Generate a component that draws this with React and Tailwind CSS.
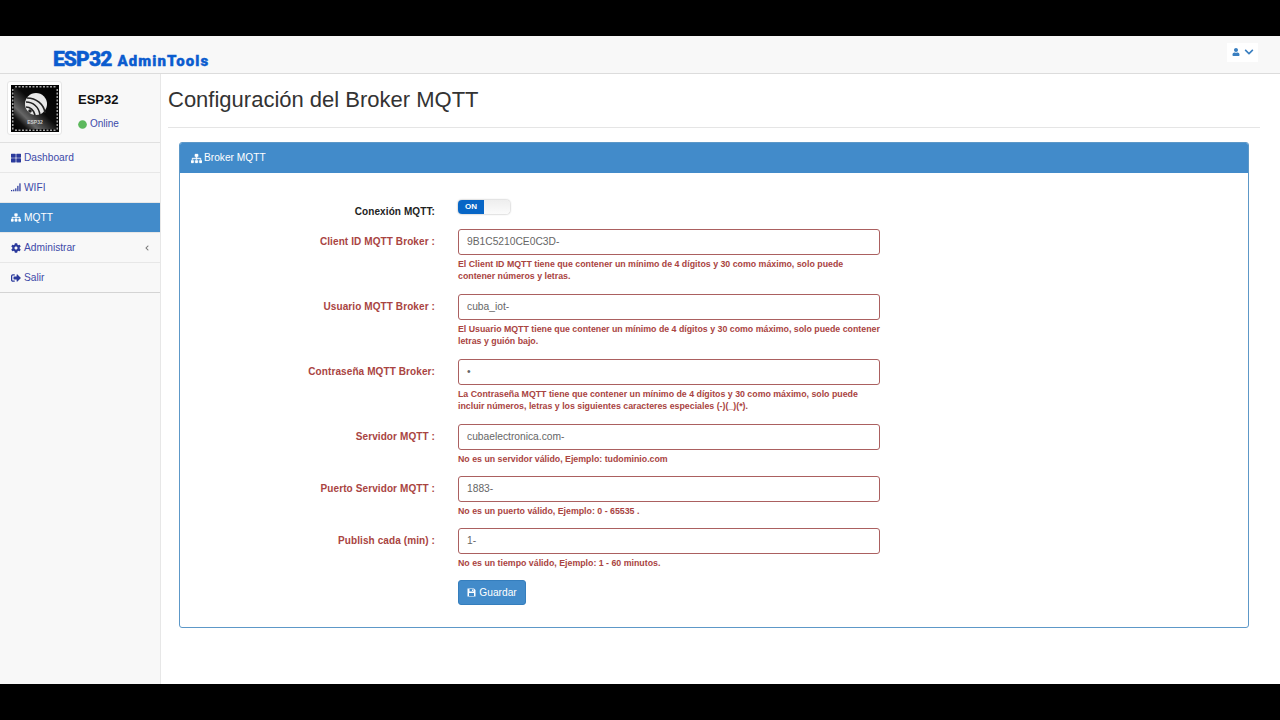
import { FaThLarge, FaSitemap, FaCog, FaSignOutAlt, FaUser, FaChevronDown, FaChevronLeft, FaCircle } from "react-icons/fa";

const fields = [
  { label: "Client ID MQTT Broker :", value: "9B1C5210CE0C3D-", help: ["El Client ID MQTT tiene que contener un mínimo de 4 dígitos y 30 como máximo, solo puede", "contener números y letras."], cls: "mb-[12px]" },
  { label: "Usuario MQTT Broker :", value: "cuba_iot-", help: ["El Usuario MQTT tiene que contener un mínimo de 4 dígitos y 30 como máximo, solo puede contener", "letras y guión bajo."], cls: "mb-[12px]" },
  { label: "Contraseña MQTT Broker:", value: "•", help: ["La Contraseña MQTT tiene que contener un mínimo de 4 dígitos y 30 como máximo, solo puede", "incluir números, letras y los siguientes caracteres especiales (-)(_)(*)."], cls: "mb-[12px]" },
  { label: "Servidor MQTT :", value: "cubaelectronica.com-", help: ["No es un servidor válido, Ejemplo: tudominio.com"], cls: "mb-[11px]" },
  { label: "Puerto Servidor MQTT :", value: "1883-", help: ["No es un puerto válido, Ejemplo: 0 - 65535 ."], cls: "mb-[11px]" },
  { label: "Publish cada (min) :", value: "1-", help: ["No es un tiempo válido, Ejemplo: 1 - 60 minutos."], cls: "mb-[11px]" },
];

function SignalIcon() {
  return (
    <svg width="10" height="9" viewBox="0 0 12 10" fill="currentColor">
      <rect x="0" y="8" width="1.5" height="1.5" />
      <rect x="2.5" y="7.5" width="1.5" height="2" />
      <rect x="5" y="6" width="1.5" height="3.5" />
      <rect x="7.5" y="3" width="1.5" height="6.5" />
      <rect x="10" y="0" width="1.5" height="9.5" />
    </svg>
  );
}

function SaveIcon() {
  return (
    <svg width="9" height="9" viewBox="0 0 18 18" fill="currentColor">
      <path fillRule="evenodd" d="M1 1h13l3 3v13H1zM5 2v5h8V2zM10 3h2v3h-2zM4 10v6h10v-6z" />
    </svg>
  );
}

function ChipLogo() {
  const pins = [4, 7.5, 11, 14.5, 18, 21.5, 25, 28.5, 32, 35.5, 39, 42.5];
  return (
    <svg width="48" height="47" viewBox="0 0 48 47">
      <defs>
        <linearGradient id="chipShade" x1="1" y1="0" x2="0" y2="1">
          <stop offset="0" stopColor="#000" />
          <stop offset="0.45" stopColor="#0a0a0a" />
          <stop offset="0.72" stopColor="#666" />
          <stop offset="0.85" stopColor="#111" />
          <stop offset="1" stopColor="#000" />
        </linearGradient>
      </defs>
      <rect width="48" height="47" fill="#050505" />
      <rect x="3" y="3" width="42" height="41" fill="url(#chipShade)" />
      {pins.map((p) => (
        <g key={p} fill="#a8a8a8">
          <rect x={p} y="1" width="2" height="1.5" />
          <rect x={p} y="44.5" width="2" height="1.5" />
          <rect x="1" y={p} width="1.5" height="2" />
          <rect x="45.5" y={p} width="1.5" height="2" />
        </g>
      ))}
      <circle cx="25" cy="19" r="11" fill="#e8e8e8" />
      <g fill="none" stroke="#222" strokeWidth="1.6">
        <path d="M16 13c9 0 17 6 18 15" />
        <path d="M15 17c7 0 13 5 14 13" />
        <path d="M15 22c4 0 8 3 9 8" />
      </g>
      <circle cx="19" cy="26" r="1.8" fill="#222" />
      <text x="24" y="39" textAnchor="middle" fontSize="5" fontWeight="700" fill="#ccc" fontFamily="Liberation Sans, sans-serif">ESP32</text>
    </svg>
  );
}

function NavItem({ icon, label, active, caret, last }) {
  return (
    <div className={`h-[30px] flex items-center pl-[11px] pr-[10px] text-[10.2px] gap-[3px] ${active ? "bg-[#428bca] text-white" : "text-[#3d4aa8]"} ${last ? "border-b border-[#d4d4d4]" : "border-b border-[#e7e7e7]"}`}>
      <span className={`w-[10px] flex items-center justify-center ${active ? "text-white" : "text-[#2b3a9c]"}`}>{icon}</span>
      <span>{label}</span>
      {caret && <FaChevronLeft className="ml-auto text-[#777] text-[6px]" />}
    </div>
  );
}

export default function App() {
  return (
    <div className="w-[1280px] h-[720px] bg-black flex flex-col overflow-hidden font-['Liberation_Sans',Arial,sans-serif]">
      <div className="h-[36px] shrink-0" />
      <div className="flex-1 min-h-0 flex flex-col bg-white">
        <header className="h-[38px] shrink-0 bg-[#f8f8f8] border-b border-[#dcdcdc] flex items-center justify-between pl-[53px] pr-[22px]">
          <div className="flex items-baseline text-[#0b5ccf] font-black font-['Roboto',sans-serif] mt-[10px] [-webkit-text-stroke:0.4px_#0b5ccf]">
            <span className="text-[21px] leading-[24px] tracking-[-0.9px]">ESP32</span>
            <span className="text-[15px] leading-[24px] ml-[6px] tracking-[1.1px]">AdminTools</span>
          </div>
          <div className="bg-white h-[19px] w-[31px] flex items-center justify-center gap-[4px] text-[#3a7fc0] -mt-[5px]">
            <FaUser className="text-[8px]" />
            <FaChevronDown className="text-[10px]" />
          </div>
        </header>
        <div className="flex-1 min-h-0 flex">
          <aside className="w-[161px] shrink-0 bg-[#f8f8f8] border-r border-[#e7e7e7]">
            <div className="h-[69px] flex items-start pt-[7px] pl-[7px] border-b border-[#e0e0e0]">
              <div className="w-[55px] h-[54px] bg-white border border-[#e6e6e6] rounded-[3px] flex items-center justify-center">
                <ChipLogo />
              </div>
              <div className="ml-[16px] pt-[11px]">
                <div className="text-[13px] leading-[16px] font-bold text-[#111]">ESP32</div>
                <div className="flex items-center gap-[3px] mt-[9px] text-[10px] leading-[14px] text-[#3d4aa8]">
                  <FaCircle className="text-[#5cb85c] text-[9px]" />
                  <span>Online</span>
                </div>
              </div>
            </div>
            <NavItem icon={<FaThLarge className="text-[10px]" />} label="Dashboard" />
            <NavItem icon={<SignalIcon />} label="WIFI" />
            <NavItem icon={<FaSitemap className="text-[11px]" stroke="currentColor" strokeWidth="20" />} label="MQTT" active />
            <NavItem icon={<FaCog className="text-[10px]" />} label="Administrar" caret />
            <NavItem icon={<FaSignOutAlt className="text-[10px]" />} label="Salir" last />
          </aside>
          <main className="flex-1 min-w-0 pl-[7px] pr-[20px]">
            <div className="h-[54px] border-b border-[#e5e5e5] flex items-start pt-[13px]">
              <h1 className="text-[22px] leading-[26px] text-[#333]">Configuración del Broker MQTT</h1>
            </div>
            <section className="mt-[14px] ml-[11px] mr-[11px] h-[486px] border border-[#5d98c8] rounded-[3px] overflow-hidden">
              <div className="h-[30px] bg-[#428bca] text-white text-[10.2px] flex items-center pl-[11px] gap-[2px]">
                <FaSitemap className="text-[11px]" stroke="currentColor" strokeWidth="20" />
                <span>Broker MQTT</span>
              </div>
              <div className="pt-[26px]">
                <div className="flex items-start mb-[11px] h-[19px]">
                  <label className="w-[255px] text-right text-[10px] font-bold text-[#222] pt-[6px] leading-[13px] tracking-[0.1px]">Conexión MQTT:</label>
                  <div className="ml-[23px] w-[52px] h-[14px] mt-[1px] rounded-[4px] overflow-hidden flex shadow-[0_0_2px_#999]">
                    <div className="w-[26px] bg-[#0866c6] text-white text-[8px] font-bold flex items-center justify-center">ON</div>
                    <div className="flex-1 bg-gradient-to-b from-[#eeeeee] to-[#fbfbfb]" />
                  </div>
                </div>
                {fields.map((f) => (
                  <div key={f.label} className={`flex items-start ${f.cls}`}>
                    <label className="w-[255px] text-right text-[10px] font-bold text-[#a94442] pt-[6px] leading-[13px] tracking-[0.1px]">{f.label}</label>
                    <div className="ml-[23px] w-[422px]">
                      <div className="h-[26px] border border-[#ab6060] rounded-[3px] flex items-center pl-[8px] text-[10.25px] text-[#666]">{f.value}</div>
                      <div className="mt-[3px] text-[8.8px] font-bold leading-[12px] text-[#a94442] whitespace-nowrap">
                        {f.help.map((h) => <div key={h}>{h}</div>)}
                      </div>
                    </div>
                  </div>
                ))}
                <div className="ml-[278px] mt-[5px]">
                  <button className="w-[68px] h-[25px] bg-[#428bca] border border-[#357ebd] rounded-[3px] text-white text-[10.2px] flex items-center justify-center gap-[3px]">
                    <SaveIcon />
                    <span>Guardar</span>
                  </button>
                </div>
              </div>
            </section>
          </main>
        </div>
      </div>
      <div className="h-[36px] shrink-0" />
    </div>
  );
}
